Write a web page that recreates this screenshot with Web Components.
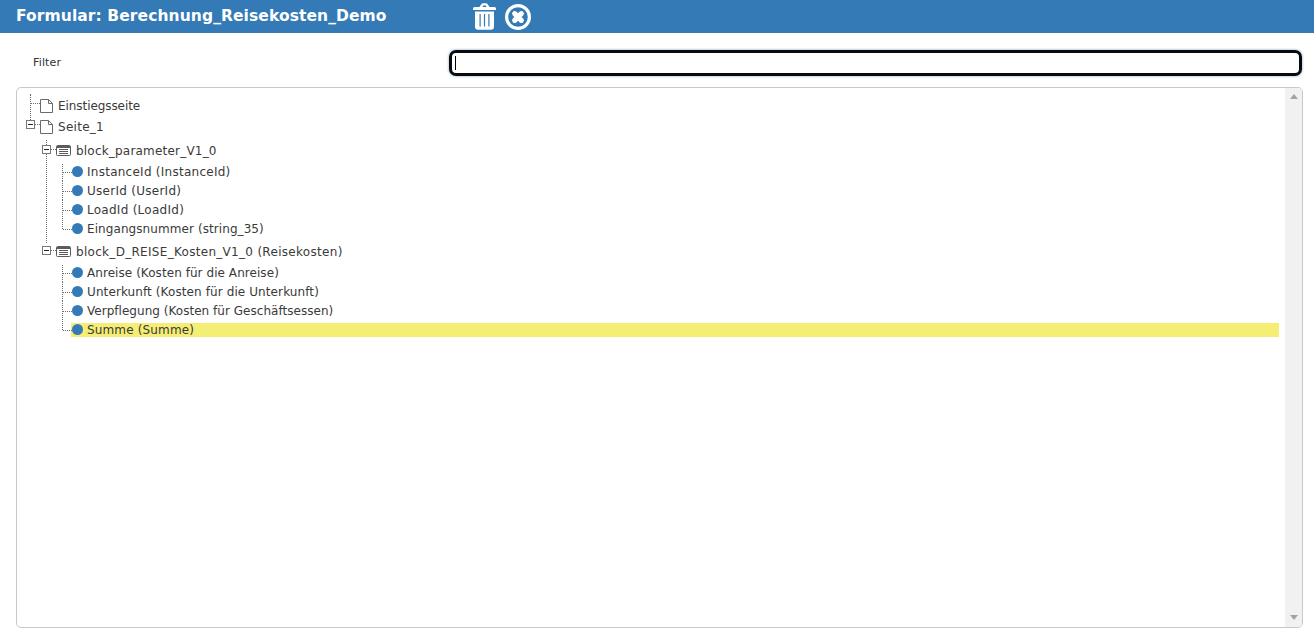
<!DOCTYPE html>
<html lang="de">
<head>
<meta charset="utf-8">
<title>Formular</title>
<style>
  html, body { margin: 0; height: 100%; background: #fff; overflow: hidden; }
  body { font-family: "DejaVu Sans", Verdana, sans-serif; color: #333; display: flex; flex-direction: column; height: 630px; }
</style>
</head>
<body>
<form-header title-text="Formular: Berechnung_Reisekosten_Demo"></form-header>
<filter-row label="Filter"></filter-row>
<tree-panel>
  <tree-node kind="page" label="Einstiegsseite" first spacing="-.07"></tree-node>
  <tree-node kind="page" label="Seite_1" open spacing=".28">
    <tree-node kind="block" label="block_parameter_V1_0" open continues spacing=".2">
      <tree-node kind="field" label="InstanceId (InstanceId)" first spacing=".26"></tree-node>
      <tree-node kind="field" label="UserId (UserId)" spacing=".27"></tree-node>
      <tree-node kind="field" label="LoadId (LoadId)" spacing=".27"></tree-node>
      <tree-node kind="field" label="Eingangsnummer (string_35)" last spacing=".08"></tree-node>
    </tree-node>
    <tree-node kind="block" label="block_D_REISE_Kosten_V1_0 (Reisekosten)" open spacing=".3">
      <tree-node kind="field" label="Anreise (Kosten für die Anreise)" first spacing=".06"></tree-node>
      <tree-node kind="field" label="Unterkunft (Kosten für die Unterkunft)" spacing=".1"></tree-node>
      <tree-node kind="field" label="Verpflegung (Kosten für Geschäftsessen)" spacing=".03"></tree-node>
      <tree-node kind="field" label="Summe (Summe)" last selected spacing=".15"></tree-node>
    </tree-node>
  </tree-node>
</tree-panel>

<script>
class FormHeader extends HTMLElement {
  constructor() {
    super();
    this.shadowDOM = this.attachShadow({ mode: 'open' });
  }

  connectedCallback() {
    this.shadowDOM.innerHTML = `
      <style>
        :host { display: flex; align-items: center; height: 33px; background: #337ab7; color: #fff; flex: none; }
        h1 { margin: 0 0 0 16px; width: 457px; flex: none; font: bold 15.5px "DejaVu Sans", Verdana, sans-serif; letter-spacing: .09px; white-space: nowrap; position: relative; top: -1px; }
        .actions { display: flex; align-items: center; gap: 9px; }
        svg { display: block; }
      </style>
      <h1>${this.getAttribute('title-text')}</h1>
      <div class="actions">
        <svg width="23" height="27" viewBox="0 0 23 27">
          <path fill="#fff" fill-rule="evenodd" d="M6.500 4 L8.300 1.200 Q9 .3 10 .3 H13 Q14 .3 14.700 1.200 L16.500 4 H21.500 Q23 4 23 5.500 V7 H0 V5.500 Q0 4 1.500 4 Z M9.400 4 H13.600 L12.700 2.600 H10.300 Z"/>
          <path fill="#fff" fill-rule="evenodd" d="M2 8.500 H21 V23.500 Q21 26.700 18 26.700 H5 Q2 26.700 2 23.500 Z M6.500 11 V23.500 H7.700 V11 Z M10.900 11 V23.500 H12.100 V11 Z M15.300 11 V23.500 H16.500 V11 Z"/>
        </svg>
        <svg width="26" height="26" viewBox="0 0 26 26">
          <circle cx="13" cy="13" r="11.400" fill="none" stroke="#fff" stroke-width="3.200"/>
          <path d="M9.700 9.700 L16.300 16.300 M16.300 9.700 L9.700 16.300" stroke="#fff" stroke-width="5.200" stroke-linecap="round"/>
        </svg>
      </div>
    `;
  }
}

class FilterRow extends HTMLElement {
  constructor() {
    super();
    this.shadowDOM = this.attachShadow({ mode: 'open' });
  }

  connectedCallback() {
    this.shadowDOM.innerHTML = `
      <style>
        :host { display: flex; align-items: center; flex: none; padding: 17px 12px 11px 33px; }
        label { width: 416px; font-size: 11px; letter-spacing: .15px; color: #333; flex: none; position: relative; top: -1px; }
        .field { position: relative; flex: 1; height: 26px; }
        input { display: block; box-sizing: border-box; width: 100%; height: 100%; margin: 0; padding: 0 4px; border: 3px solid #0a0a0a; border-radius: 7px; outline: none; background: #fff; box-shadow: 0 0 2px 1px #bcd6ee; }
        .caret { position: absolute; left: 6px; top: 6px; width: 1px; height: 14px; background: #000; }
      </style>
      <label>${this.getAttribute('label')}</label>
      <div class="field"><input type="text"><span class="caret"></span></div>
    `;
  }
}

class TreePanel extends HTMLElement {
  constructor() {
    super();
    this.shadowDOM = this.attachShadow({ mode: 'open' });
  }

  connectedCallback() {
    this.shadowDOM.innerHTML = `
      <style>
        :host { display: flex; box-sizing: border-box; height: 541px; margin-left: 16px; width: 1287px; border: 1px solid #c8c8c8; border-radius: 5px; overflow: hidden; flex: none; }
        .content { flex: 1; padding-top: 7px; min-width: 0; }
        .bar { width: 17px; flex: none; background: #f1f1f1; display: flex; flex-direction: column; justify-content: space-between; align-items: center; padding: 6px 0 7px; box-sizing: border-box; }
        .up { width: 0; height: 0; border: 4px solid transparent; border-top: 0; border-bottom: 5px solid #a3a3a3; }
        .down { width: 0; height: 0; border: 4px solid transparent; border-bottom: 0; border-top: 5px solid #a3a3a3; }
      </style>
      <div class="content"><slot></slot></div>
      <div class="bar"><span class="up"></span><span class="down"></span></div>
    `;
  }
}

const ICONS = {
  page: `<svg width="13" height="14" viewBox="0 0 13 14"><path d="M.5 .5 H8.500 L12.500 4.500 V13.500 H.5 Z M8.500 .5 V4.500 H12.500" fill="#fff" stroke="#6a6a6a"/></svg>`,
  block: `<svg width="15" height="11" viewBox="0 0 15 11"><rect x=".5" y=".5" width="14" height="10" rx="1" fill="#fff" stroke="#5c5c5c"/><path d="M1 1 H14 V3 H1 Z" fill="#5c5c5c"/><path d="M3 4.500 H12 M3 6.500 H12 M3 8.500 H12" stroke="#5c5c5c"/></svg>`,
  field: `<svg width="11" height="11" viewBox="0 0 11 11"><circle cx="5.500" cy="5.500" r="5.500" fill="#337ab7"/></svg>`
};

class TreeNode extends HTMLElement {
  constructor() {
    super();
    this.shadowDOM = this.attachShadow({ mode: 'open' });
  }

  connectedCallback() {
    const kind = this.getAttribute('kind');
    const box = this.hasAttribute('open') ? '<span class="box"></span>' : '';
    const spacing = this.getAttribute('spacing') || '0';
    this.shadowDOM.innerHTML = `
      <style>
        :host { display: block; position: relative; font-size: 12px; color: #3a3a3a; white-space: nowrap; }
        .row { position: relative; display: flex; align-items: center; }
        .icon { position: relative; display: flex; flex: none; }
        .icon svg { display: block; }
        .label { position: relative; letter-spacing: ${spacing}px; }

        :host([kind="page"]) .row { height: 21px; padding-left: 23px; gap: 5px; }
        :host([kind="block"]) { margin-top: 3px; }
        :host([kind="block"]) .row { height: 22px; padding-left: 39px; gap: 5px; }
        :host([kind="block"]) .icon { top: -1px; }
        :host([kind="field"]) .row { height: 19px; padding-left: 55px; gap: 4px; }
        .bg { position: absolute; }
        :host([kind="field"][selected]) .bg { left: 54px; right: 6px; top: 3px; height: 14px; background: #f5ee75; }

        .h, .v { position: absolute; }
        .h { border-top: 1px dotted #6e6e6e; }
        .v { border-left: 1px dotted #6e6e6e; }
        :host([kind="page"]) .h { top: 8px; left: 14px; width: 9px; }
        :host([kind="page"][first]) .v { left: 13px; top: -1px; height: 26px; }
        :host([kind="block"]) .h { top: 9px; left: 34px; width: 5px; }
        :host([kind="block"][continues]) .v { left: 29px; top: 0; height: 103px; }
        :host([kind="field"]) .h { top: 10px; left: 46px; width: 9px; }
        :host([kind="field"]) .v { left: 45px; top: -1px; height: 20px; }
        :host([kind="field"][first]) .v { top: 2px; height: 17px; }
        :host([kind="field"][last]) .v { height: 11px; }

        .box { position: absolute; box-sizing: border-box; width: 9px; height: 9px; background: #fff; border: 1px solid #777; }
        .box::after { content: ""; position: absolute; left: 1px; top: 3px; width: 5px; height: 1px; background: #222; }
        :host([kind="page"]) .box { left: 9px; top: 4px; }
        :host([kind="block"]) .box { left: 25px; top: 5px; }
      </style>
      <div class="row">
        <span class="bg"></span>
        <span class="v"></span>
        <span class="h"></span>
        ${box}
        <span class="icon">${ICONS[kind]}</span>
        <span class="label">${this.getAttribute('label')}</span>
      </div>
      <slot></slot>
    `;
  }
}

customElements.define('form-header', FormHeader);
customElements.define('filter-row', FilterRow);
customElements.define('tree-panel', TreePanel);
customElements.define('tree-node', TreeNode);
</script>
</body>
</html>
